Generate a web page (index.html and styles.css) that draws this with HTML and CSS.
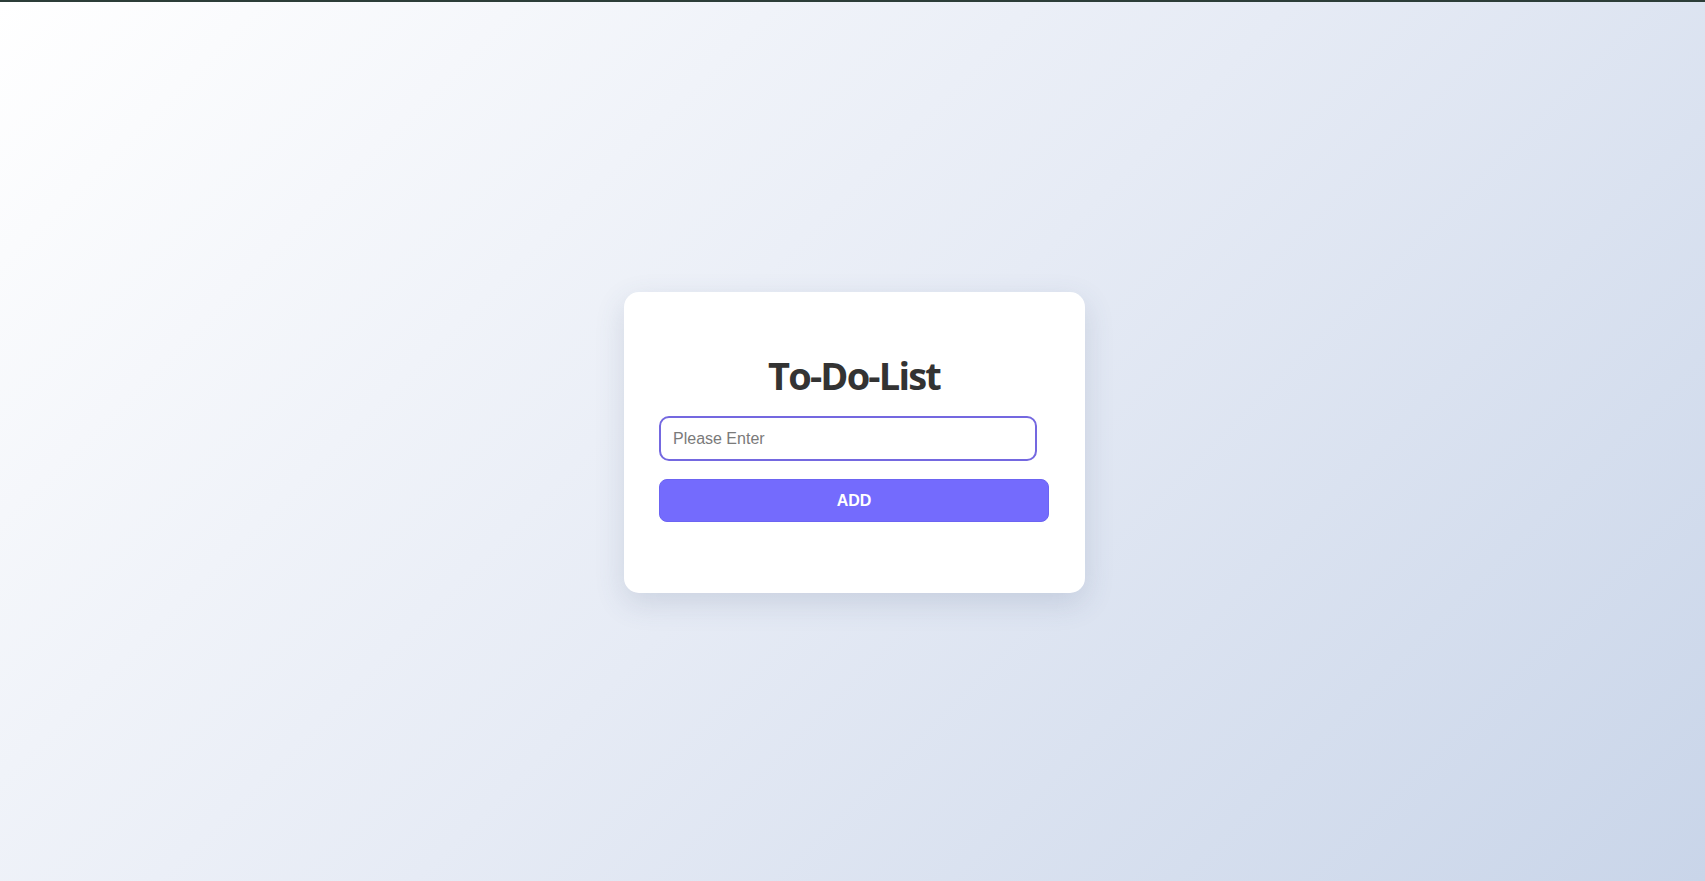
FILE: index.html
```html
<!DOCTYPE html>
<html lang="en">
<head>
<meta charset="utf-8">
<title>To-Do-List</title>
<link rel="stylesheet" href="styles.css">
</head>
<body>
<div class="topbar"></div>
<main class="stage">
  <section class="card">
    <h1 class="title">To-Do-List</h1>
    <input class="task-input" type="text" placeholder="Please Enter">
    <button class="add-btn" type="button">ADD</button>
  </section>
</main>
</body>
</html>
```

FILE: styles.css
```css
html, body {
  margin: 0;
  padding: 0;
  height: 100%;
}
body {
  background: linear-gradient(135deg, #ffffff 0%, #e6ebf5 50%, #c9d5e9 100%);
  font-family: "Liberation Sans", Arial, sans-serif;
  overflow: hidden;
}
.topbar {
  height: 2px;
  background: #2c3d38;
}
.stage {
  height: calc(100vh - 2px);
  display: flex;
  align-items: center;
  justify-content: center;
  padding: 2px 0 0 4px;
  box-sizing: border-box;
}
.card {
  width: 461px;
  box-sizing: border-box;
  background: #fff;
  border-radius: 15px;
  padding: 60px 36px 71px 35px;
  box-shadow: 0 10px 30px rgba(60, 80, 120, 0.16);
  display: flex;
  flex-direction: column;
  align-items: flex-start;
}
.title {
  align-self: stretch;
  margin: 0 0 18px 0;
  text-align: center;
  font-family: "Open Sans", "Noto Sans", sans-serif;
  font-weight: 700;
  font-size: 38px;
  line-height: 46px;
  letter-spacing: -1.8px;
  color: #333;
}
.task-input {
  width: 378px;
  height: 45px;
  box-sizing: border-box;
  border: 2px solid #7468e0;
  border-radius: 10px;
  padding: 0 12px;
  font-family: "Liberation Sans", Arial, sans-serif;
  font-size: 16px;
  color: #333;
  outline: none;
  margin: 0 0 18px 0;
}
.task-input::placeholder {
  color: #7a7a7a;
}
.add-btn {
  width: 390px;
  height: 43px;
  box-sizing: border-box;
  border: 1px solid #6c64f2;
  border-radius: 8px;
  background: #746bfd;
  color: #fff;
  font-family: "Liberation Sans", Arial, sans-serif;
  font-weight: 700;
  font-size: 16px;
  cursor: pointer;
}
```
